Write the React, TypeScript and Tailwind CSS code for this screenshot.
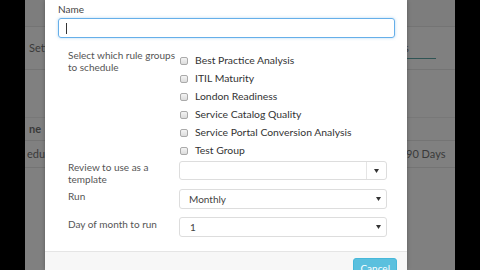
export default function App() {
  const groups = [
    'Best Practice Analysis',
    'ITIL Maturity',
    'London Readiness',
    'Service Catalog Quality',
    'Service Portal Conversion Analysis',
    'Test Group',
  ];

  const Caret = () => (
    <svg width="5" height="4" viewBox="0 0 5 4">
      <path d="M0 0 H5 L2.5 4 Z" fill="#333" />
    </svg>
  );

  return (
    <div className="flex h-[270px] w-[480px] overflow-hidden bg-black" style={{ fontFamily: 'Lato, "Open Sans", sans-serif' }}>
      <div className="w-[25px] shrink-0 bg-black" />

      {/* dimmed page behind the modal */}
      <div className="relative w-[430px] shrink-0 bg-[#808080] text-[11px] text-[#3a3a3a]">
        <div className="h-[27px] border-b border-[#747474] bg-[#7d7d7d]" />
        <div className="flex h-[43px] items-center justify-between border-b border-[#747474] px-[4px]">
          <span>Sett</span>
          <div className="relative flex h-full w-[48px] items-center">
            <span className="pl-[1px]">s</span>
            <div className="absolute bottom-[10px] left-0 h-[1px] w-[33px] bg-[#2f5454]" />
          </div>
        </div>
        <div className="h-[48px] border-b border-[#787878]" />
        <div className="flex h-[23px] items-center border-b border-[#747474] px-[4px]">
          <span className="font-bold">ne</span>
        </div>
        <div className="flex h-[27px] items-center justify-between border-b border-[#747474] px-[2px]">
          <span>edule r</span>
          <span className="w-[47px]">90 Days</span>
        </div>

        {/* modal */}
        <div className="absolute left-[20px] top-0 flex h-[270px] w-[362px] flex-col bg-white shadow-[0_0_4px_rgba(0,0,0,0.3)]">
          <div className="px-[13px] pt-[3px]">
            <div className="text-[10px] leading-[13px] text-[#444]">Name</div>
            <div className="mt-[2px] flex h-[20px] w-[337px] items-center rounded-[3px] border border-[#66afe9] px-[7px] shadow-[0_0_3px_rgba(102,175,233,0.5)]">
              <div className="h-[11px] w-[1px] bg-[#333]" />
            </div>
          </div>

          <div className="mt-[10px] flex">
            <div className="w-[134px] shrink-0 pl-[23px] pt-[1px] text-[10px] leading-[12px] text-[#555]">
              Select which rule groups
              <br />
              to schedule
            </div>
            <div className="flex flex-col pt-[4px]">
              {groups.map((g) => (
                <div key={g} className="flex h-[18px] items-center gap-[7px] pl-[1px]">
                  <div className="h-[8px] w-[8px] rounded-[2px] border border-[#aaa] bg-gradient-to-b from-[#f4f4f4] to-[#dcdcdc]" />
                  <span className="text-[10.4px] text-[#333]">{g}</span>
                </div>
              ))}
            </div>
          </div>

          <div className="mt-[1px] flex">
            <div className="w-[134px] shrink-0 pl-[23px] text-[10px] leading-[12px] text-[#555]">
              Review to use as a
              <br />
              template
            </div>
            <div className="flex h-[19px] w-[208px] items-center rounded-[3px] border border-[#ddd]">
              <div className="h-full flex-1 border-r border-[#e5e5e5]" />
              <div className="flex w-[19px] justify-center">
                <Caret />
              </div>
            </div>
          </div>

          <div className="mt-[4px] flex">
            <div className="w-[134px] shrink-0 pl-[23px] pt-[1px] text-[10px] leading-[12px] text-[#555]">Run</div>
            <div className="flex h-[20px] w-[208px] items-center justify-between rounded-[3px] border border-[#ddd] pl-[9px] pr-[5px] text-[10px] text-[#444]">
              <span>Monthly</span>
              <Caret />
            </div>
          </div>

          <div className="mt-[8px] flex">
            <div className="w-[134px] shrink-0 pl-[23px] pt-[1px] text-[10px] leading-[12px] text-[#555]">Day of month to run</div>
            <div className="flex h-[20px] w-[208px] items-center justify-between rounded-[3px] border border-[#ddd] pl-[10px] pr-[5px] text-[10px] text-[#444]">
              <span>1</span>
              <Caret />
            </div>
          </div>

          <div className="mt-[14px] flex flex-1 justify-end border-t border-[#e5e5e5] bg-[#f7f7f7] pr-[10px] pt-[6px]">
            <div className="h-[20px] rounded-[3px] border border-[#46b8da] bg-[#5bc0de] px-[6px] text-[10px] leading-[18px] text-white">
              Cancel
            </div>
          </div>
        </div>
      </div>

      <div className="w-[25px] shrink-0 bg-black" />
    </div>
  );
}
